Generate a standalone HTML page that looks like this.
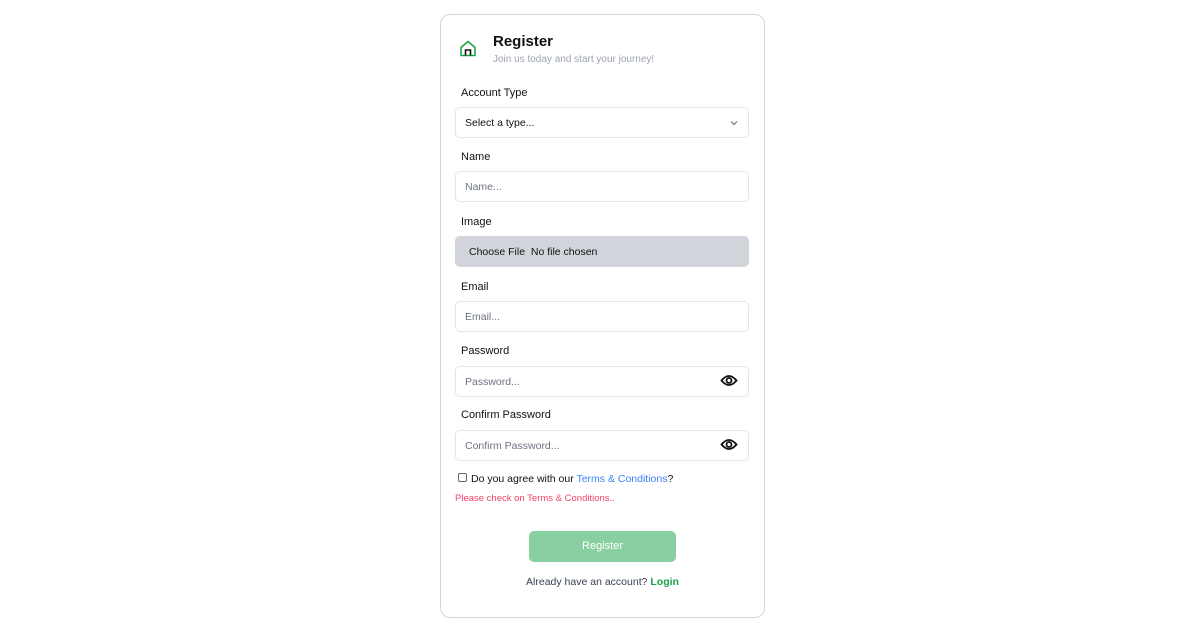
<!DOCTYPE html>
<html><head><meta charset="utf-8"><style>
*{box-sizing:border-box;margin:0;padding:0}
body{width:1200px;height:630px;background:#fff;font-family:"Liberation Sans",sans-serif;position:relative;overflow:hidden}
.card{position:absolute;left:440px;top:14px;width:325px;height:604px;border:1px solid #d4d6db;border-radius:10px}
.a{position:absolute;white-space:nowrap}
.lbl{position:absolute;left:461px;font-size:11px;color:#111;line-height:14px}
.in{position:absolute;left:455px;width:294px;height:31px;border:1px solid #e3e5e8;border-radius:5px;font-size:10.5px;color:#6b7280;padding-left:9px;padding-top:1px;line-height:29px}
</style></head><body>
<div class="card"></div>
<svg class="a" style="left:459px;top:40px" width="18" height="17" viewBox="0 0 18 17"><path d="M2 7.5 L9 1.5 L16 7.5 V15.5 H2 Z" fill="none" stroke="#1fa34a" stroke-width="1.6" stroke-linejoin="round"/><path d="M6.5 15.5 V10 H11.5 V15.5" fill="none" stroke="#111" stroke-width="1.6"/></svg>
<div class="a" style="left:493px;top:33px;font-size:15px;font-weight:bold;color:#111">Register</div>
<div class="a" style="left:493px;top:54px;font-size:10px;color:#9ca3af">Join us today and start your journey!</div>
<div class="lbl" style="top:86px">Account Type</div>
<div class="in" style="top:107px;color:#111">Select a type...
<svg class="a" style="left:273px;top:11px" width="10" height="8" viewBox="0 0 10 8"><path d="M2 2.5 L5 5.5 L8 2.5" fill="none" stroke="#666" stroke-width="1"/></svg></div>
<div class="lbl" style="top:150px">Name</div>
<div class="in" style="top:171px">Name...</div>
<div class="lbl" style="top:215px">Image</div>
<div class="in" style="top:236px;background:#d1d4da;border-color:#d1d4da;color:#111;padding-left:13px">Choose File&nbsp;&nbsp;No file chosen</div>
<div class="lbl" style="top:280px">Email</div>
<div class="in" style="top:301px">Email...</div>
<div class="lbl" style="top:344px">Password</div>
<div class="in" style="top:366px">Password...</div>
<div class="lbl" style="top:408px">Confirm Password</div>
<div class="in" style="top:430px">Confirm Password...</div>
<svg class="a" style="left:720px;top:373px" width="18" height="15" viewBox="0 0 18 15"><path d="M1.5 7.5 Q9 -1.5 16.5 7.5 Q9 16.5 1.5 7.5 Z" fill="none" stroke="#111" stroke-width="1.8"/><circle cx="9" cy="7.5" r="2.5" fill="none" stroke="#111" stroke-width="1.8"/></svg>
<svg class="a" style="left:720px;top:437px" width="18" height="15" viewBox="0 0 18 15"><path d="M1.5 7.5 Q9 -1.5 16.5 7.5 Q9 16.5 1.5 7.5 Z" fill="none" stroke="#111" stroke-width="1.8"/><circle cx="9" cy="7.5" r="2.5" fill="none" stroke="#111" stroke-width="1.8"/></svg>
<div class="a" style="left:458px;top:473px;width:9px;height:9px;border:1px solid #666;border-radius:2px"></div>
<div class="a" style="left:471px;top:473px;font-size:10.5px;color:#111">Do you agree with our <span style="color:#3b82f6">Terms &amp; Conditions</span>?</div>
<div class="a" style="left:455px;top:493px;font-size:9.5px;color:#ef4466">Please check on Terms &amp; Conditions..</div>
<div class="a" style="left:529px;top:531px;width:147px;height:31px;background:#88d0a1;border-radius:5px;color:#fff;font-size:11px;text-align:center;line-height:31px">Register</div>
<div class="a" style="left:0;width:1205px;top:576px;text-align:center;font-size:10.5px;color:#374151">Already have an account? <b style="color:#16a34a">Login</b></div>
</body></html>
